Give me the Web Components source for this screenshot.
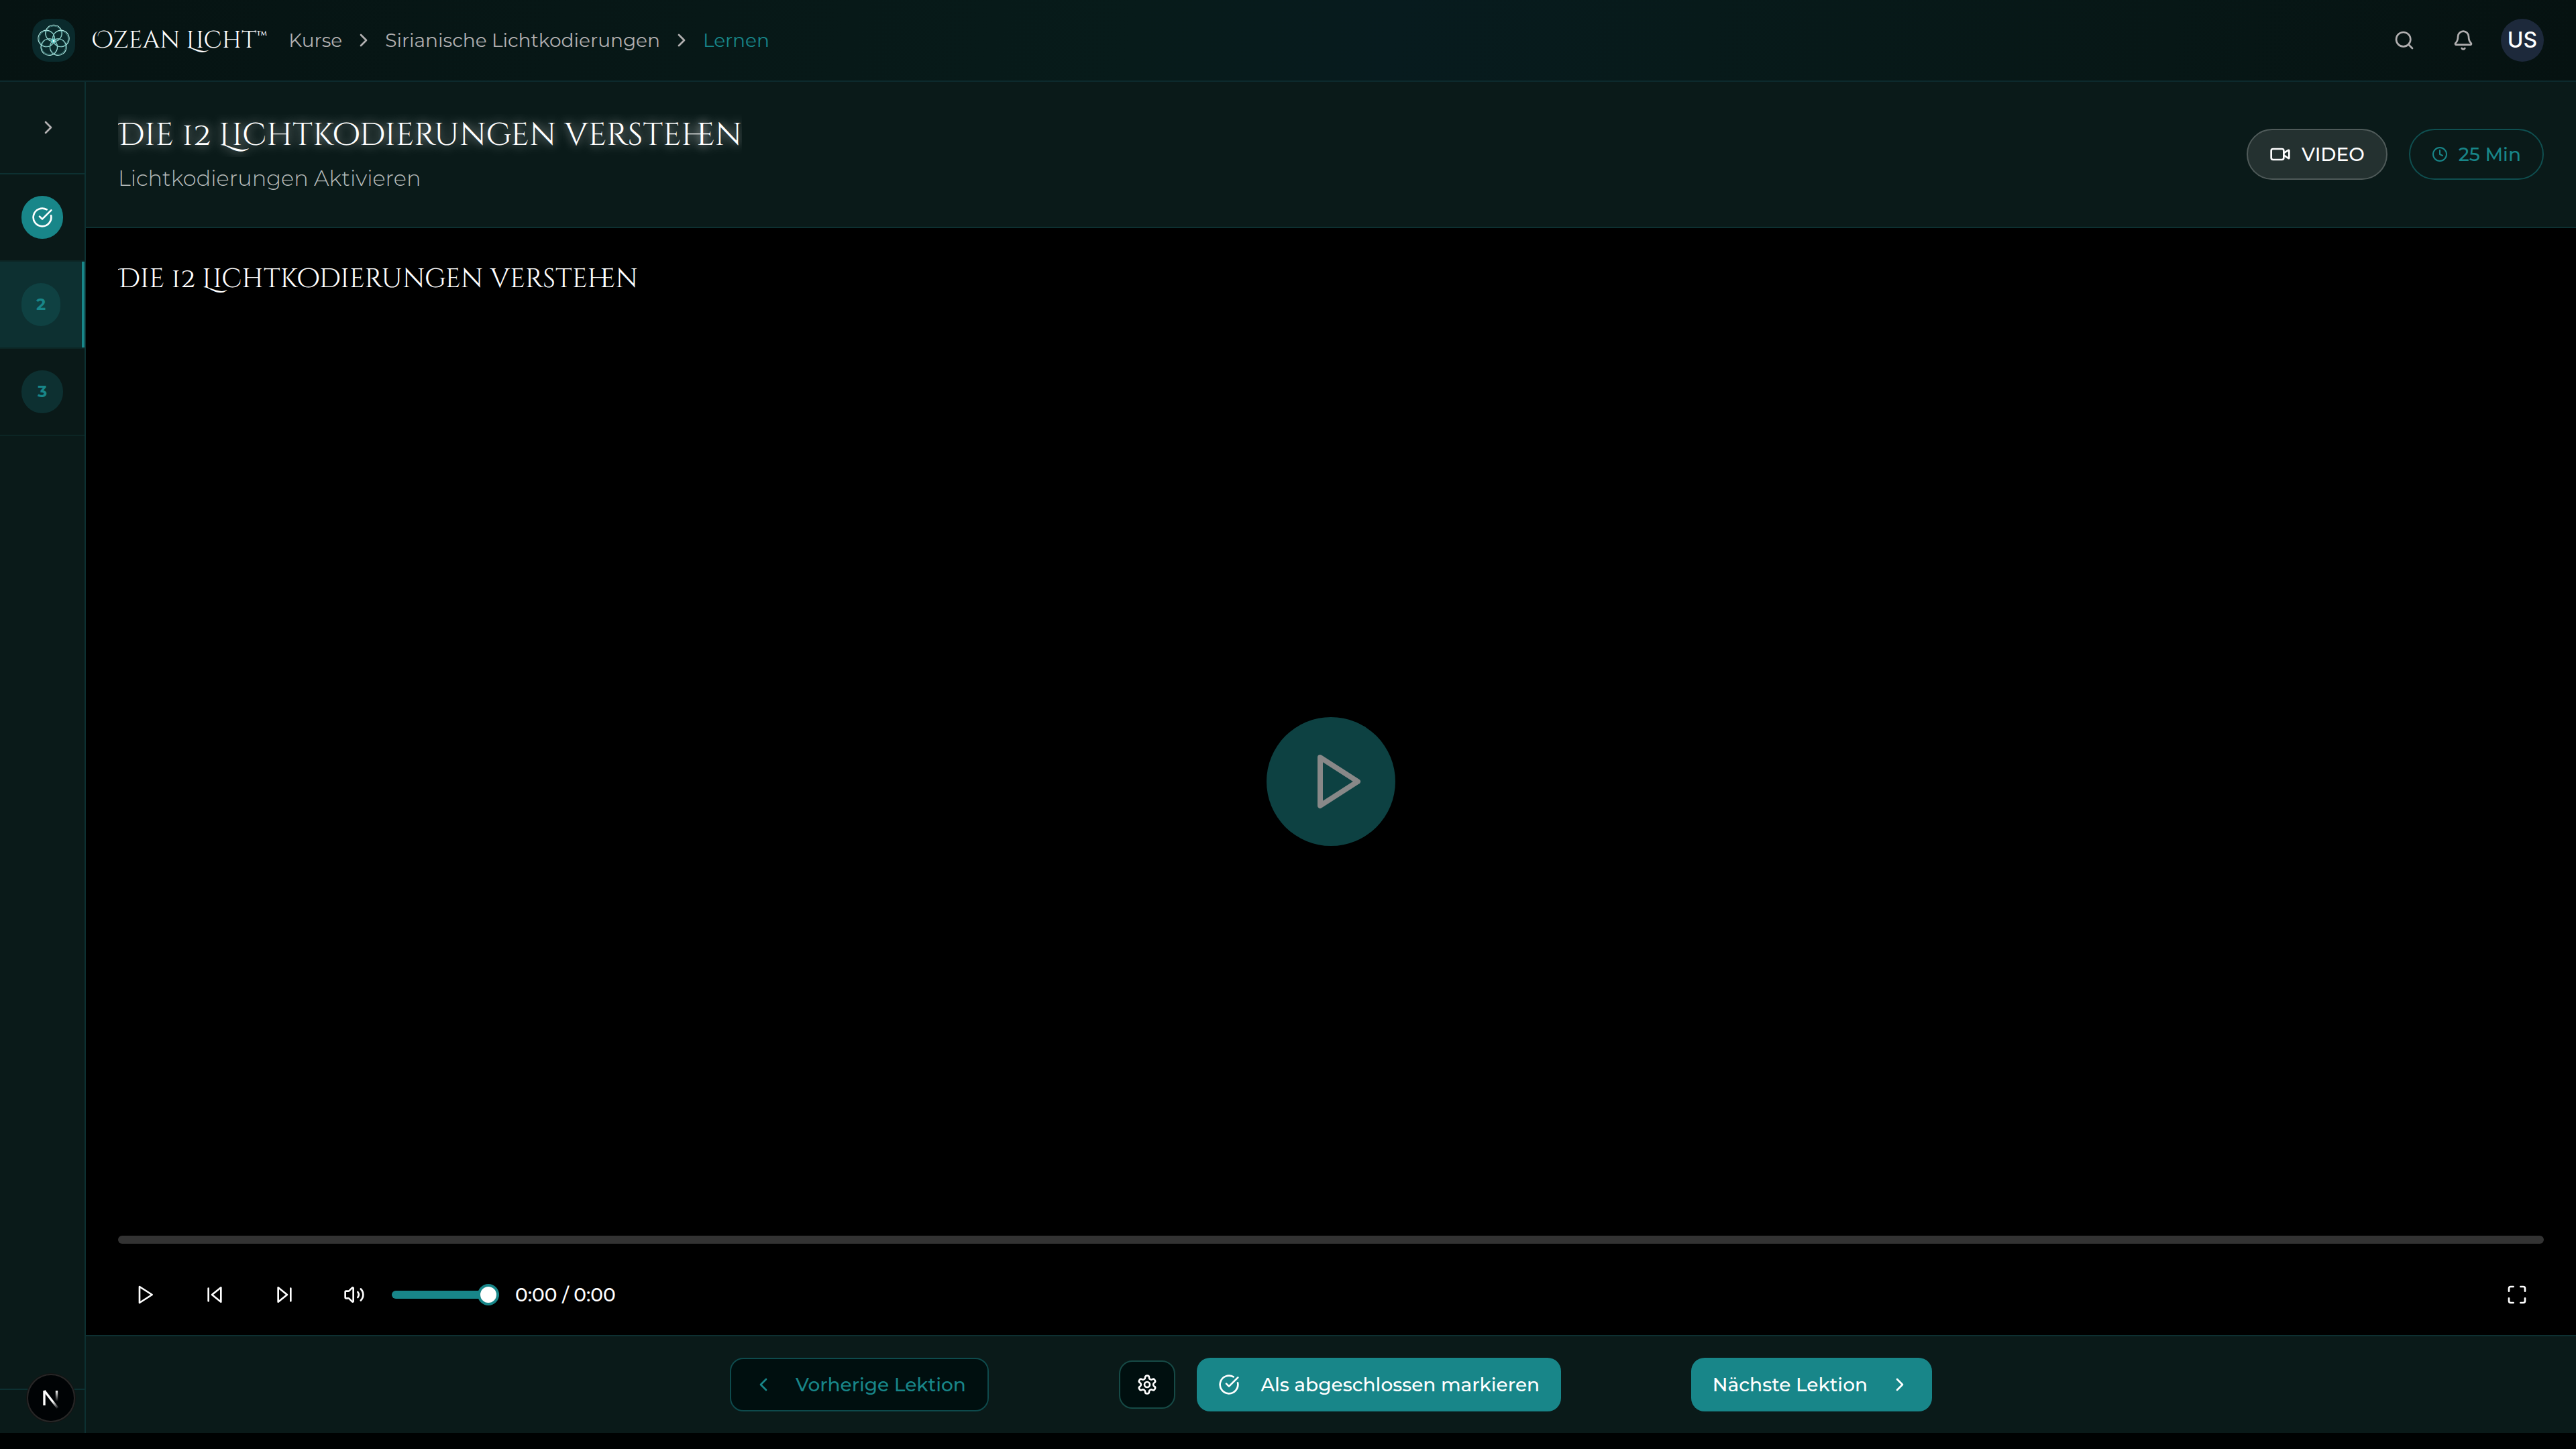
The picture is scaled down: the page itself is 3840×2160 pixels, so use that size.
<!DOCTYPE html>
<html lang="de">
<head>
<meta charset="utf-8">
<meta name="viewport" content="width=device-width, initial-scale=1">
<title>Ozean Licht – Lernen</title>
<style>
  html, body { height: 100%; margin: 0; }
  body {
    --teal: #188689;
    --surface: #0a1a19;
    --line: #0d3031;
    --muted: #b2b0b1;
    --deep: #000f0f;
    --display: "Cinzel Decorative", "Liberation Serif", serif;
    background: #000202;
    color: #fff;
    font-family: Montserrat, "DejaVu Sans", sans-serif;
    font-size: 28px;
    line-height: 40px;
  }
</style>
</head>
<body>
<lesson-page></lesson-page>

<script>
const ICONS = {
  'chevron-right': '<path d="m9 18 6-6-6-6"/>',
  'chevron-left': '<path d="m15 18-6-6 6-6"/>',
  'search': '<circle cx="11" cy="11" r="8"/><path d="m21 21-4.3-4.3"/>',
  'bell': '<path d="M10.268 21a2 2 0 0 0 3.464 0"/><path d="M3.262 15.326A1 1 0 0 0 4 17h16a1 1 0 0 0 .74-1.673C19.41 13.956 18 12.499 18 8A6 6 0 0 0 6 8c0 4.499-1.411 5.956-2.738 7.326"/>',
  'check': '<path d="M21.801 10A10 10 0 1 1 17 3.335"/><path d="m9 11 3 3L22 4"/>',
  'video': '<path d="m16 13 5.223 3.482a.5.5 0 0 0 .777-.416V7.87a.5.5 0 0 0-.752-.432L16 10.5"/><rect x="2" y="6" width="14" height="12" rx="2"/>',
  'clock': '<circle cx="12" cy="12" r="10"/><path d="M12 6v6l4 2"/>',
  'play': '<path d="m6 3 14 9-14 9z"/>',
  'skip-back': '<path d="M19 20 9 12l10-8z"/><path d="M5 19V5"/>',
  'skip-forward': '<path d="m5 4 10 8-10 8z"/><path d="M19 5v14"/>',
  'volume': '<path d="M11 4.702a.705.705 0 0 0-1.203-.498L6.413 7.587A1.4 1.4 0 0 1 5.416 8H3a1 1 0 0 0-1 1v6a1 1 0 0 0 1 1h2.416a1.4 1.4 0 0 1 .997.413l3.383 3.384A.705.705 0 0 0 11 19.298z"/><path d="M16 9a5 5 0 0 1 0 6"/><path d="M19.364 18.364a9 9 0 0 0 0-12.728"/>',
  'maximize': '<path d="M8 3H5a2 2 0 0 0-2 2v3"/><path d="M21 8V5a2 2 0 0 0-2-2h-3"/><path d="M3 16v3a2 2 0 0 0 2 2h3"/><path d="M16 21h3a2 2 0 0 0 2-2v-3"/>',
  'settings': '<path d="M12.22 2h-.44a2 2 0 0 0-2 2v.18a2 2 0 0 1-1 1.73l-.43.25a2 2 0 0 1-2 0l-.15-.08a2 2 0 0 0-2.73.73l-.22.38a2 2 0 0 0 .73 2.73l.15.1a2 2 0 0 1 1 1.72v.51a2 2 0 0 1-1 1.74l-.15.09a2 2 0 0 0-.73 2.73l.22.38a2 2 0 0 0 2.73.73l.15-.08a2 2 0 0 1 2 0l.43.25a2 2 0 0 1 1 1.73V20a2 2 0 0 0 2 2h.44a2 2 0 0 0 2-2v-.18a2 2 0 0 1 1-1.73l.43-.25a2 2 0 0 1 2 0l.15.08a2 2 0 0 0 2.73-.73l.22-.39a2 2 0 0 0-.73-2.73l-.15-.08a2 2 0 0 1-1-1.74v-.5a2 2 0 0 1 1-1.74l.15-.09a2 2 0 0 0 .73-2.73l-.22-.38a2 2 0 0 0-2.73-.73l-.15.08a2 2 0 0 1-2 0l-.43-.25a2 2 0 0 1-1-1.73V4a2 2 0 0 0-2-2z"/><circle cx="12" cy="12" r="3"/>'
};

const define = (name, render) => customElements.define(name, class extends HTMLElement {
  connectedCallback() {
    if (this.shadowRoot) return;
    const root = this.attachShadow({ mode: 'open' });
    const template = document.createElement('template');
    template.innerHTML = '<style>*{box-sizing:border-box}</style>' + render(this);
    root.append(template.content.cloneNode(true));
  }
});

/* Stroke icon; its size comes from --size */
define('line-icon', el => `
  <style>
    :host { display: block; flex: none; width: var(--size, 32px); height: var(--size, 32px); }
    svg { display: block; width: 100%; height: 100%; }
  </style>
  <svg viewBox="0 0 24 24" fill="none" stroke="currentColor" stroke-width="2" stroke-linecap="round" stroke-linejoin="round" aria-hidden="true">${ICONS[el.getAttribute('name')]}</svg>`);

/* Round flower emblem of the brand */
define('brand-mark', () => {
  let rings = '';
  for (let i = 0; i < 5; i++) {
    rings += `<g transform="rotate(${i * 72} 32 33)">
      <circle cx="32" cy="21.6" r="12.3" stroke="#b5efe9"/>
      <circle cx="32" cy="22.4" r="11.6" stroke="#5fb3ae" stroke-width=".6"/>
      <path d="M32 29v3M30.4 30.4l3.2 1.6" stroke="#5fe0e0"/></g>`;
  }
  return `
  <style>
    :host { display: block; width: 64px; height: 64px; border-radius: 24px; background: #0a2a2c; }
    svg { display: block; }
  </style>
  <svg width="64" height="64" viewBox="0 0 64 64" fill="none" stroke-width="1.1" aria-hidden="true">${rings}<circle cx="32" cy="33" r="1.2" fill="#fff"/></svg>`;
});

define('icon-button', el => `
  <style>
    :host { display: block; }
    button { display: flex; align-items: center; justify-content: center; width: 80px; height: 72px; padding: 0; border: 0; border-radius: 20px; background: none; color: inherit; cursor: pointer; }
    :host([boxed]) button { width: 84px; border: 2px solid #164a46; background: var(--deep); }
  </style>
  <button type="button" aria-label="${el.getAttribute('label')}"><line-icon name="${el.getAttribute('icon')}"></line-icon></button>`);

define('action-button', () => `
  <style>
    :host { display: block; }
    button { display: flex; align-items: center; gap: 32px; height: 80px; padding: 0 32px; border: 0; border-radius: 20px; background: var(--teal); color: #fff; font: inherit; font-weight: 500; white-space: nowrap; cursor: pointer; }
    :host([outline]) button { border: 2px solid #0e4a4c; background: var(--deep); color: var(--teal); }
  </style>
  <button type="button"><slot name="before"></slot><span><slot></slot></span><slot name="after"></slot></button>`);

define('info-badge', () => `
  <style>
    :host { display: flex; align-items: center; gap: 16px; height: 76px; padding: 0 32px; border: 2px solid #0f4f50; border-radius: 38px; color: var(--teal); font-weight: 500; white-space: nowrap; }
    :host([solid]) { background: #243130; border-color: #4f5a59; color: #fff; }
  </style>
  <slot></slot>`);

define('crumb-trail', () => `
  <style>
    :host { display: block; color: var(--muted); }
    ol { display: flex; align-items: center; gap: 16px; margin: 0; padding: 0; list-style: none; }
    li { display: flex; align-items: center; gap: 16px; white-space: nowrap; }
    a { color: inherit; text-decoration: none; }
    [aria-current] { color: var(--teal); }
  </style>
  <nav aria-label="Brotkrumen"><ol>
    <li><a href="#kurse">Kurse</a><line-icon name="chevron-right"></line-icon></li>
    <li><a href="#kurs">Sirianische Lichtkodierungen</a><line-icon name="chevron-right"></line-icon></li>
    <li><a href="#lernen" aria-current="page">Lernen</a></li>
  </ol></nav>`);

define('top-bar', () => `
  <style>
    :host { display: block; border-bottom: 2px solid #0d2a2d; background: linear-gradient(100deg, #061312 0%, #071716 22%, #071b1a 44%, #071b1e 54%, #071a1a 66%, #071716 84%, #061211 100%); }
    header { display: flex; align-items: center; height: 120px; padding: 0 48px; }
    .brand { display: flex; align-items: center; gap: 24px; margin-right: 32px; color: #fff; font-family: var(--display); font-size: 36px; text-decoration: none; white-space: nowrap; }
    .tools { display: flex; align-items: center; gap: 8px; margin-left: auto; color: var(--muted); }
    .avatar { width: 64px; height: 64px; margin-left: 8px; padding: 0; border: 0; border-radius: 50%; background: #1d293b; color: #fff; font: 500 32px/64px Inter, sans-serif; cursor: pointer; }
  </style>
  <header>
    <a class="brand" href="#start"><brand-mark></brand-mark><span>Ozean Licht™</span></a>
    <crumb-trail></crumb-trail>
    <div class="tools">
      <icon-button icon="search" label="Suche"></icon-button>
      <icon-button icon="bell" label="Benachrichtigungen"></icon-button>
      <button class="avatar" type="button">US</button>
    </div>
  </header>`);

define('lesson-step', el => `
  <style>
    :host { display: block; border-bottom: 2px solid #0c2524; background: #0a1918; }
    button { display: block; width: 100%; height: 128px; padding: 32px; border: 0; background: none; color: var(--teal); font: 700 24px/32px Montserrat, sans-serif; cursor: pointer; }
    span { display: flex; align-items: center; justify-content: center; height: 64px; border-radius: 32px; background: #0d3031; }
    :host([done]) span { background: var(--teal); color: #fff; }
    :host([active]) { background: #0d3031; }
    :host([active]) button { border-right: 4px solid var(--teal); }
    :host([active]) span { background: #0f4142; }
  </style>
  <button type="button"${el.hasAttribute('active') ? ' aria-current="step"' : ''}><span><slot></slot></span></button>`);

define('lesson-rail', () => `
  <style>
    :host { display: flex; flex-direction: column; flex: none; width: 128px; border-right: 2px solid var(--line); background: var(--surface); }
    .toggle { padding: 32px; border-bottom: 2px solid var(--line); color: var(--muted); }
    .foot { height: 66px; margin-top: auto; border-top: 2px solid var(--line); }
  </style>
  <div class="toggle"><icon-button icon="chevron-right" label="Seitenleiste öffnen"></icon-button></div>
  <lesson-step done><line-icon name="check"></line-icon></lesson-step>
  <lesson-step active>2</lesson-step>
  <lesson-step>3</lesson-step>
  <div class="foot"></div>`);

define('lesson-heading', () => `
  <style>
    :host { display: flex; align-items: center; justify-content: space-between; padding: 48px; border-bottom: 2px solid var(--line); background: var(--surface); }
    h1 { margin: 0 0 8px; overflow: hidden; font: 400 48px/64px var(--display); text-shadow: 0 0 16px rgba(255, 255, 255, .7); white-space: nowrap; }
    p { margin: 0; color: #b6baba; font-size: 32px; font-weight: 300; line-height: 48px; }
    .badges { display: flex; gap: 32px; }
    .small { --size: 24px; }
  </style>
  <div><h1>Die 12 Lichtkodierungen verstehen</h1><p>Lichtkodierungen Aktivieren</p></div>
  <div class="badges">
    <info-badge solid><line-icon name="video"></line-icon>VIDEO</info-badge>
    <info-badge><line-icon class="small" name="clock"></line-icon>25 Min</info-badge>
  </div>`);

define('video-player', () => `
  <style>
    :host { display: flex; flex-direction: column; flex: 1; position: relative; padding: 48px 48px 24px; background: #000; }
    h2 { margin: 0; overflow: hidden; font: 400 40px/56px var(--display); white-space: nowrap; }
    .big { position: absolute; inset: 0; margin: auto; display: flex; align-items: center; justify-content: center; width: 192px; height: 192px; padding: 0 0 0 16px; border: 0; border-radius: 50%; background: #0d4142; color: #888; cursor: pointer; --size: 96px; }
    input { appearance: none; -webkit-appearance: none; display: block; height: 12px; margin: 0; border-radius: 6px; background: #333; cursor: pointer; }
    .seek { width: 100%; margin-top: auto; }
    .seek::-webkit-slider-thumb { -webkit-appearance: none; width: 0; height: 0; }
    .volume { width: 160px; margin-left: 16px; background: var(--teal); }
    .volume::-webkit-slider-thumb { -webkit-appearance: none; width: 32px; height: 32px; border: 4px solid var(--teal); border-radius: 50%; background: #fff; }
    .bar { display: flex; align-items: center; margin-top: 40px; }
    .keys { display: flex; gap: 24px; }
    .time { margin-left: 24px; font-weight: 500; }
    .full { margin-left: auto; }
  </style>
  <h2>Die 12 Lichtkodierungen verstehen</h2>
  <button class="big" type="button" aria-label="Abspielen"><line-icon name="play"></line-icon></button>
  <input class="seek" type="range" min="0" max="100" value="0" aria-label="Position">
  <div class="bar">
    <div class="keys">
      <icon-button icon="play" label="Wiedergabe"></icon-button>
      <icon-button icon="skip-back" label="Zurück"></icon-button>
      <icon-button icon="skip-forward" label="Vor"></icon-button>
      <icon-button icon="volume" label="Ton"></icon-button>
    </div>
    <input class="volume" type="range" min="0" max="100" value="100" aria-label="Lautstärke">
    <span class="time">0:00 / 0:00</span>
    <icon-button class="full" icon="maximize" label="Vollbild"></icon-button>
  </div>`);

define('lesson-footer', () => `
  <style>
    :host { display: block; padding: 32px 48px; border-top: 2px solid var(--line); background: var(--surface); }
    .row { display: flex; align-items: center; justify-content: space-between; max-width: 1792px; margin: 0 auto; }
    .mid { display: flex; align-items: center; gap: 32px; }
  </style>
  <div class="row">
    <action-button outline><line-icon slot="before" name="chevron-left"></line-icon>Vorherige Lektion</action-button>
    <div class="mid">
      <icon-button boxed icon="settings" label="Einstellungen"></icon-button>
      <action-button><line-icon slot="before" name="check"></line-icon>Als abgeschlossen markieren</action-button>
    </div>
    <action-button>Nächste Lektion<line-icon slot="after" name="chevron-right"></line-icon></action-button>
  </div>`);

/* Floating developer badge in the lower left corner */
define('dev-badge', () => `
  <style>
    :host { position: fixed; left: 40px; bottom: 40px; z-index: 2; }
    button { display: block; width: 72px; height: 72px; padding: 0; border: 2px solid #272727; border-radius: 50%; background: #000305; box-shadow: 0 0 0 1px #141414; cursor: pointer; }
    svg { display: block; }
  </style>
  <button type="button" aria-label="Entwicklerwerkzeuge">
    <svg width="68" height="68" viewBox="0 0 68 68" fill="none" stroke-width="3.4" aria-hidden="true">
      <defs>
        <linearGradient id="a" gradientUnits="userSpaceOnUse" x1="38" y1="38" x2="46" y2="49"><stop stop-color="#fff"/><stop offset="1" stop-color="#fff" stop-opacity="0"/></linearGradient>
        <linearGradient id="b" gradientUnits="userSpaceOnUse" x1="0" y1="23" x2="0" y2="39"><stop stop-color="#fff"/><stop offset="1" stop-color="#fff" stop-opacity="0"/></linearGradient>
      </defs>
      <line x1="24" y1="23" x2="24" y2="45" stroke="#fff"/>
      <line x1="24" y1="23" x2="44" y2="49" stroke="url(#a)"/>
      <line x1="42.5" y1="23" x2="42.6" y2="39" stroke="url(#b)"/>
    </svg>
  </button>`);

define('lesson-page', () => `
  <style>
    :host { display: flex; flex-direction: column; min-height: 100vh; padding-bottom: 24px; box-sizing: border-box; }
    .body { display: flex; flex: 1; }
    main { display: flex; flex: 1; flex-direction: column; min-width: 0; }
  </style>
  <top-bar></top-bar>
  <div class="body">
    <lesson-rail></lesson-rail>
    <main>
      <lesson-heading></lesson-heading>
      <video-player></video-player>
      <lesson-footer></lesson-footer>
    </main>
  </div>
  <dev-badge></dev-badge>`);
</script>
</body>
</html>
